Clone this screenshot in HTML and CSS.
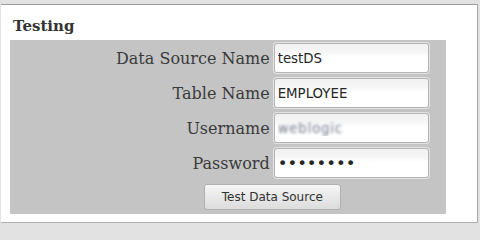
FILE: index.html
```html
<!DOCTYPE html>
<html>
<head>
<meta charset="utf-8">
<link rel="stylesheet" href="styles.css">
</head>
<body>
<div class="frame">
  <div class="title">Testing</div>
  <div class="panel">
    <div class="form">
      <label class="lbl" for="ds">Data Source Name</label>
      <input class="field" id="ds" type="text" value="testDS">
      <label class="lbl" for="tn">Table Name</label>
      <input class="field" id="tn" type="text" value="EMPLOYEE">
      <label class="lbl" for="un">Username</label>
      <input class="field blurred" id="un" type="text" value="weblogic">
      <label class="lbl" for="pw">Password</label>
      <input class="field secret" id="pw" type="password" value="weblogic">
      <div class="actions"><button class="btn" type="button">Test Data Source</button></div>
    </div>
  </div>
</div>
</body>
</html>
```
FILE: styles.css
```css
html, body {
  margin: 0;
  padding: 0;
}
body {
  background: #e2e2e2;
  width: 480px;
  height: 225px;
  overflow: hidden;
}
.frame {
  margin: 4px 2px 2px 1px;
  height: 219px;
  box-sizing: border-box;
  background: #ffffff;
  border-top: 1px solid #9c9c9c;
  border-right: 1px solid #a8a8a8;
  border-bottom: 1px solid #b0b0b0;
  display: flex;
  flex-direction: column;
}
.title {
  font-family: "DejaVu Serif", serif;
  font-weight: bold;
  font-size: 15px;
  line-height: 20px;
  color: #333333;
  padding: 11px 0 4px 12px;
}
.panel {
  background: #c4c4c4;
  margin: 0 31px 0 9px;
  padding: 3px 0 4px 0;
}
.form {
  display: grid;
  grid-template-columns: auto 155px;
  column-gap: 4px;
  row-gap: 5px;
  align-items: center;
  margin-left: 106px;
  width: max-content;
}
.lbl {
  font-family: "DejaVu Serif", serif;
  font-size: 16px;
  color: #3a3a3a;
  text-align: right;
  white-space: nowrap;
}
.field {
  height: 30px;
  box-sizing: border-box;
  border: 1px solid #b4b4b4;
  border-radius: 3px;
  box-shadow: 0 0 0 1px #e4e4e4;
  background: linear-gradient(#f1f1f1 0, #f6f6f6 30%, #ffffff 45%);
  font-family: "DejaVu Sans", sans-serif;
  font-size: 13.33px;
  color: #262626;
  padding: 0 3px;
  margin: 0;
  outline: none;
}
.blurred {
  color: transparent;
  text-shadow: 0 0 3px #737a8e;
  letter-spacing: 0.8px;
}
.secret {
  font-size: 16.5px;
  letter-spacing: 0;
}
.actions {
  grid-column: 1 / span 2;
  display: flex;
  justify-content: center;
  padding-top: 1px;
}
.btn {
  height: 26px;
  width: 137px;
  box-sizing: border-box;
  border: 1px solid #b0b0b0;
  border-radius: 3px;
  background: linear-gradient(#f6f6f6, #e6e6e6 60%, #dcdcdc);
  font-family: "DejaVu Sans", sans-serif;
  font-size: 12px;
  color: #333333;
  padding: 0;
  margin: 0;
}
```
